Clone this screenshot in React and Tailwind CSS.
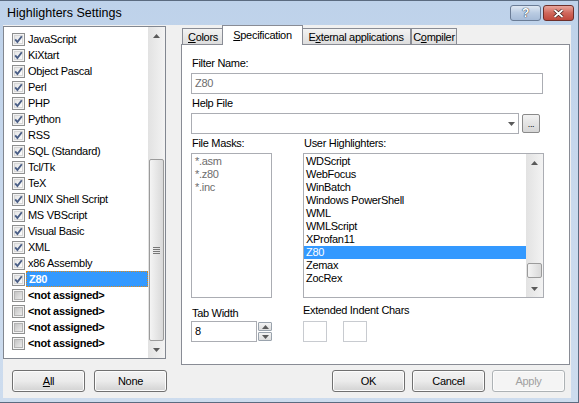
import React from 'react';

const leftItems = [
  { name: 'JavaScript', on: true },
  { name: 'KiXtart', on: true },
  { name: 'Object Pascal', on: true },
  { name: 'Perl', on: true },
  { name: 'PHP', on: true },
  { name: 'Python', on: true },
  { name: 'RSS', on: true },
  { name: 'SQL (Standard)', on: true },
  { name: 'Tcl/Tk', on: true },
  { name: 'TeX', on: true },
  { name: 'UNIX Shell Script', on: true },
  { name: 'MS VBScript', on: true },
  { name: 'Visual Basic', on: true },
  { name: 'XML', on: true },
  { name: 'x86 Assembly', on: true },
  { name: 'Z80', on: true, selected: true },
  { name: '<not assigned>', on: false, bold: true },
  { name: '<not assigned>', on: false, bold: true },
  { name: '<not assigned>', on: false, bold: true },
  { name: '<not assigned>', on: false, bold: true },
];

const highlighters = ['WDScript', 'WebFocus', 'WinBatch', 'Windows PowerShell', 'WML', 'WMLScript', 'XProfan11', 'Z80', 'Zemax', 'ZocRex'];

function CheckBox({ checked }) {
  return (
    <span className="relative flex h-[13px] w-[13px] shrink-0 items-center justify-center border border-[#8e8f8f] bg-[#f4f4f4]">
      <span
        className={`h-[9px] w-[9px] border ${
          checked
            ? 'border-[#d6d6d6] bg-gradient-to-br from-[#e6e6e6] to-[#fcfcfc]'
            : 'border-[#b4b4b4] bg-gradient-to-br from-[#c4c4c4] to-[#ebebeb]'
        }`}
      />
      {checked && (
        <svg className="absolute left-0 top-0" width="11" height="11" viewBox="0 0 11 11">
          <path d="M2.2 5.4 L4.4 8 L8.8 2.2" fill="none" stroke="#4a5e86" strokeWidth="1.9" />
        </svg>
      )}
    </span>
  );
}

function Arrow({ up }) {
  return (
    <svg width="7" height="4" viewBox="0 0 7 4">
      <path d={up ? 'M0 4 L3.5 0 L7 4 Z' : 'M0 0 L7 0 L3.5 4 Z'} fill="#5a5a5a" />
    </svg>
  );
}

function ScrollBar({ before, thumb, grip }) {
  return (
    <div className="flex w-[17px] shrink-0 flex-col bg-gradient-to-r from-[#e2e2e2] to-[#f3f3f3]">
      <div className="flex h-[17px] shrink-0 items-center justify-center">
        <Arrow up />
      </div>
      <div className="shrink-0" style={{ height: before }} />
      <div
        className="mx-[1px] flex shrink-0 items-center justify-center rounded-[2px] border border-[#9b9b9b] bg-gradient-to-r from-[#f4f4f4] to-[#d9d9d9]"
        style={{ height: thumb }}
      >
        {grip && (
          <div className="flex flex-col gap-[1px]">
            <div className="h-[1px] w-[7px] bg-[#777]" />
            <div className="h-[1px] w-[7px] bg-[#777]" />
            <div className="h-[1px] w-[7px] bg-[#777]" />
            <div className="h-[1px] w-[7px] bg-[#777]" />
          </div>
        )}
      </div>
      <div className="flex-1" />
      <div className="flex h-[17px] shrink-0 items-center justify-center">
        <Arrow />
      </div>
    </div>
  );
}

function Button({ children, disabled, className = '' }) {
  return (
    <div
      className={`flex h-[22px] w-[73px] items-center justify-center rounded-[3px] border shadow-[inset_0_0_0_1px_#fcfcfc] ${
        disabled
          ? 'border-[#adb2b5] bg-[#f4f4f4] text-[#a0a0a0]'
          : 'border-[#707070] bg-gradient-to-b from-[#f2f2f2] via-[#ebebeb] to-[#d2d2d2] text-black'
      } ${className}`}
    >
      {children}
    </div>
  );
}

function Tab({ children, selected, className = '' }) {
  return (
    <div
      className={`flex items-center justify-center border border-b-0 border-[#898c95] ${
        selected ? 'relative z-10 -mx-[2px] h-[20px] bg-white' : 'h-[17px] bg-gradient-to-b from-[#f3f3f3] to-[#dcdcdc]'
      } ${className}`}
    >
      {children}
    </div>
  );
}

export default function App() {
  return (
    <div className="flex h-[403px] w-[579px] flex-col border-y border-r border-[#5b6b80] bg-gradient-to-b from-[#bed2ea] via-[#c9d9ed] to-[#cddcee] font-['Liberation_Sans',Arial,sans-serif] text-[11px] leading-[13px] tracking-[-0.3px] text-black">
      {/* title bar */}
      <div className="flex h-[24px] shrink-0 items-start">
        <div className="ml-[7px] mt-[4px] text-[12.5px] leading-[16px] tracking-normal text-black">Highlighters Settings</div>
        <div className="ml-auto mr-[4px] mt-[4px] flex gap-[2px]">
          <div className="flex h-[16px] w-[31px] items-center justify-center rounded-[3px] border border-[#6a7c96] bg-gradient-to-b from-[#dfe8f3] via-[#b9cbe2] to-[#a6bbd7]">
            <span className="text-[12px] font-bold leading-[12px] text-white [text-shadow:0_0_1px_#1d2a3f,0_0_1px_#1d2a3f]">?</span>
          </div>
          <div className="flex h-[16px] w-[31px] items-center justify-center rounded-[3px] border border-[#6d2f2a] bg-gradient-to-b from-[#e8a59c] via-[#d0675b] to-[#c0483c]">
            <svg width="11" height="9" viewBox="0 0 11 9">
              <path d="M1.5 1 L9.5 8 M9.5 1 L1.5 8" stroke="#3a1a18" strokeWidth="3.2" />
              <path d="M1.5 1 L9.5 8 M9.5 1 L1.5 8" stroke="#ffffff" strokeWidth="1.8" />
            </svg>
          </div>
        </div>
      </div>

      {/* client area */}
      <div className="mb-[4px] ml-[3px] mr-[7px] flex flex-1 flex-col bg-[#f0f0f0]">
        <div className="flex h-[341px]">
          {/* left checklist */}
          <div className="mt-[1px] flex h-[333px] w-[163px] shrink-0 border border-[#828790] bg-white">
            <div className="flex-1 overflow-hidden pt-[4px]">
              {leftItems.map((it, i) => (
                <div key={i} className="flex h-[16px] items-center pl-[8px]">
                  <CheckBox checked={it.on} />
                  <span
                    className={`ml-[1px] flex h-[16px] flex-1 items-center pl-[2px] ${
                      it.selected ? 'border border-dotted border-[#e08a18] bg-[#3399ff] pl-[1px] font-bold text-white' : ''
                    } ${it.bold ? 'font-bold' : ''}`}
                  >
                    {it.name}
                  </span>
                </div>
              ))}
            </div>
            <ScrollBar before={115} thumb={182} grip />
          </div>

          {/* tab control */}
          <div className="ml-[15px] flex w-[389px] flex-col">
            <div className="flex h-[20px] items-end pl-[1px]">
              <Tab className="w-[42px]">
                <span><u>C</u>olors</span>
              </Tab>
              <Tab selected className="w-[81px]">
                <span><u>S</u>pecification</span>
              </Tab>
              <Tab className="w-[110px]">
                <span>E<u>x</u>ternal applications</span>
              </Tab>
              <Tab className="w-[46px]">
                <span>C<u>o</u>mpiler</span>
              </Tab>
            </div>
            <div className="-mt-[1px] flex h-[321px] flex-col border border-[#898c95] bg-white pl-[9px]">
              <div className="ml-[1px] mt-[12px] h-[13px]">Filter Name:</div>
              <div className="mt-[3px] flex h-[21px] w-[352px] items-center border border-[#abadb3] bg-white pl-[3px] text-[#6d6d6d]">
                Z80
              </div>
              <div className="ml-[1px] mt-[3px] h-[13px]">Help File</div>
              <div className="mt-[3px] flex items-center">
                <div className="flex h-[21px] w-[328px] items-center justify-end border border-[#abadb3] bg-white pr-[3px]">
                  <Arrow />
                </div>
                <div className="ml-[3px] flex h-[19px] w-[18px] items-end justify-center rounded-[2px] border border-[#8a8a8a] bg-gradient-to-b from-[#f2f2f2] to-[#d6d6d6] pb-[3px] text-[9px] leading-[9px]">
                  ...
                </div>
              </div>
              <div className="mt-[3px] flex">
                <div className="ml-[1px] w-[111px]">File Masks:</div>
                <div className="ml-[1px]">User Highlighters:</div>
              </div>
              <div className="mt-[3px] flex h-[145px]">
                <div className="w-[81px] border border-[#abadb3] bg-white pl-[3px] pt-[1px] text-[#6d6d6d]">
                  <div className="h-[13px]">*.asm</div>
                  <div className="h-[13px]">*.z80</div>
                  <div className="h-[13px]">*.inc</div>
                </div>
                <div className="ml-[31px] flex w-[241px] border border-[#abadb3] bg-white">
                  <div className="flex-1 pt-[1px]">
                    {highlighters.map((h) => (
                      <div key={h} className={`h-[13px] pl-[2px] ${h === 'Z80' ? 'bg-[#3399ff] text-white' : ''}`}>
                        {h}
                      </div>
                    ))}
                  </div>
                  <ScrollBar before={92} thumb={15} />
                </div>
              </div>
              <div className="flex">
                <div className="flex w-[112px] flex-col">
                  <div className="ml-[1px] mt-[9px] h-[13px]">Tab Width</div>
                  <div className="mt-[1px] flex">
                    <div className="flex h-[21px] w-[66px] items-center border border-[#abadb3] bg-white pl-[3px]">8</div>
                    <div className="ml-[1px] mt-[1px] flex w-[14px] flex-col gap-[1px]">
                      <div className="flex h-[9px] items-center justify-center rounded-[1px] border border-[#9aa3ad] bg-gradient-to-b from-[#f4f4f4] to-[#dcdcdc]">
                        <Arrow up />
                      </div>
                      <div className="flex h-[9px] items-center justify-center rounded-[1px] border border-[#9aa3ad] bg-gradient-to-b from-[#f4f4f4] to-[#dcdcdc]">
                        <Arrow />
                      </div>
                    </div>
                  </div>
                </div>
                <div className="flex flex-col">
                  <div className="mt-[6px] h-[13px]">Extended Indent Chars</div>
                  <div className="mt-[4px] flex gap-[16px]">
                    <div className="h-[21px] w-[24px] border border-[#c8cbd0] bg-white" />
                    <div className="h-[21px] w-[24px] border border-[#c8cbd0] bg-white" />
                  </div>
                </div>
              </div>
            </div>
          </div>
        </div>

        {/* buttons */}
        <div className="mt-[4px] flex">
          <Button className="ml-[9px] w-[71px]">
            <span><u>A</u>ll</span>
          </Button>
          <Button className="ml-[9px] w-[71px]">None</Button>
          <div className="ml-auto mr-[6px] flex gap-[7px]">
            <Button>OK</Button>
            <Button>Cancel</Button>
            <Button disabled>Apply</Button>
          </div>
        </div>
      </div>
    </div>
  );
}
